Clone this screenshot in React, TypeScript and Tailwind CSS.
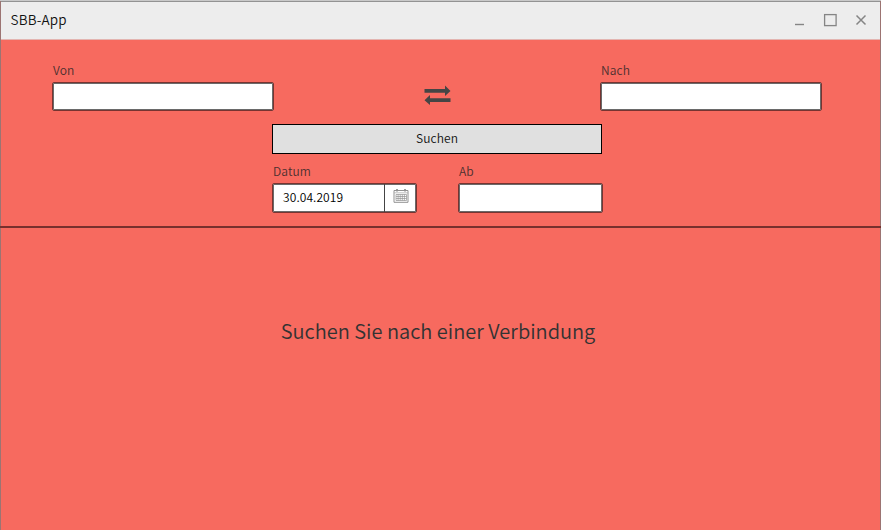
import type { ReactNode } from "react";

const fieldFrame =
  "box-border rounded-[2px] border border-[#763431] bg-white shadow-[inset_0_0_0_1px_#6a6a6a]";

function Label({ children }: { children: ReactNode }) {
  return (
    <label className="block h-[20px] whitespace-nowrap pl-px text-[12px] leading-[18px] tracking-[0.1px] text-[#4b302f]">
      {children}
    </label>
  );
}

function TitleBar() {
  return (
    <header className="flex h-[39px] shrink-0 items-start justify-between border-t border-b border-t-[#939393] border-b-[#e3b5b1] bg-[#ededed] pl-[9.5px] pr-[13px]">
      <h1 className="mt-[7px] text-[13.5px] leading-[20px] tracking-[0.2px] text-[#111]">SBB-App</h1>
      <svg className="mt-[10px]" width="74" height="16" viewBox="0 0 74 16" fill="none" stroke="#858585">
        <path d="M2 12.5h9" strokeWidth="1.4" />
        <rect x="31.6" y="2.6" width="11.5" height="11" strokeWidth="1.3" />
        <path d="M63.5 3.5l9 9M72.5 3.5l-9 9" strokeWidth="1.5" />
      </svg>
    </header>
  );
}

function SwapIcon() {
  return (
    <svg width="27" height="20" viewBox="0 0 27 20" fill="#454545">
      <path d="M0.5 4H21V0.5L26.5 5.9L21 11V7.8H0.5Z" />
      <path d="M26.5 13.2H6V10L0.5 15.2L6 20V17H26.5Z" />
    </svg>
  );
}

function CalendarIcon() {
  return (
    <svg width="16" height="16" viewBox="0 0 16 16" fill="none" stroke="#929292">
      <path d="M1 2.5h14v11.8H1z" strokeWidth="1" />
      <path d="M1 4.8h14" strokeWidth="0.8" stroke="#b0b0b0" />
      <path d="M4 1v2.5M12 1v2.5" strokeWidth="1.8" />
      <path d="M3 6.5h10.5v6H3zM3 8.5h10.5M3 10.5h10.5M5.1 6.5v6M7.2 6.5v6M9.3 6.5v6M11.4 6.5v6" strokeWidth="0.7" />
    </svg>
  );
}

export default function App() {
  return (
    <div className="flex h-[530px] w-[881px] flex-col overflow-hidden bg-[#c9c9c9] pt-px font-['Noto_Sans_CJK_SC','Noto_Sans',sans-serif] font-[350]">
      <div className="flex flex-1 flex-col border-x border-[#9c7472] bg-[#f76a5f]">
        <TitleBar />
        <main className="flex flex-1 flex-col">
          <section className="flex flex-col pt-[21px]">
            <div className="flex h-[50px] justify-between pl-[51px] pr-[58px]">
              <div className="w-[222px]">
                <Label>Von</Label>
                <div className={`${fieldFrame} mt-px h-[29px] w-[222px]`} />
              </div>
              <button className="ml-[1px] mt-[24px] h-[20px]" aria-label="Von und Nach tauschen">
                <SwapIcon />
              </button>
              <div className="w-[222px]">
                <Label>Nach</Label>
                <div className={`${fieldFrame} mt-px h-[29px] w-[222px]`} />
              </div>
            </div>
            <button className="ml-[271px] mt-[13px] flex h-[30px] w-[330px] justify-center border border-black bg-[#e0e0e0] text-[12px] leading-[26px] tracking-[0.1px] text-[#111]">
              Suchen
            </button>
            <div className="ml-[271px] mt-[8px] flex h-[51px] w-[331px] justify-between">
              <div className="w-[145px]">
                <Label>Datum</Label>
                <div className={`${fieldFrame} mt-px flex h-[30px] w-[145px]`}>
                  <span className="w-[111px] pl-[10px] text-[12px] leading-[25px] tracking-[0.1px] text-black">
                    30.04.2019
                  </span>
                  <span className="flex flex-1 justify-center border-l border-[#444] pt-[4px]">
                    <CalendarIcon />
                  </span>
                </div>
              </div>
              <div className="w-[145px]">
                <Label>Ab</Label>
                <div className={`${fieldFrame} mt-px h-[30px] w-[145px]`} />
              </div>
            </div>
          </section>
          <hr className="-mx-px mt-[13px] h-[2px] border-0 bg-[#78302d]" />
          <p className="mt-[87px] pr-[5px] text-center text-[20px] leading-[32px] text-[#333]">
            Suchen Sie nach einer Verbindung
          </p>
        </main>
      </div>
    </div>
  );
}
